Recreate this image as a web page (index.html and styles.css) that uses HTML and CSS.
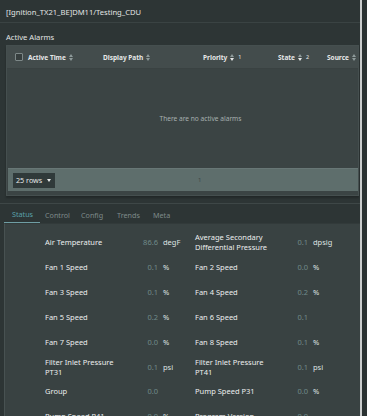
FILE: index.html
```html
<!DOCTYPE html>
<html>
<head>
<meta charset="utf-8">
<link rel="stylesheet" href="styles.css">
</head>
<body>
<div class="page">
  <div class="main">
    <div class="title">[Ignition_TX21_BE]DM11/Testing_CDU</div>
    <div class="section-label">Active Alarms</div>
    <div class="table">
      <div class="thead">
        <div class="th th-check"><span class="checkbox"></span></div>
        <div class="th th-time">Active Time <span class="sort"></span></div>
        <div class="th th-path">Display Path <span class="sort"></span></div>
        <div class="th th-prio">Priority <span class="sort"></span><sup>1</sup></div>
        <div class="th th-state">State <span class="sort"></span><sup>2</sup></div>
        <div class="th th-src">Source <span class="sort"></span></div>
      </div>
      <div class="tbody">There are no active alarms</div>
      <div class="tfoot">
        <div class="rows-select">25 rows <span class="caret"></span></div>
        <div class="pager">1</div>
      </div>
    </div>
    <div class="divider"></div>
    <div class="tabs">
      <div class="tab active">Status</div>
      <div class="tab">Control</div>
      <div class="tab">Config</div>
      <div class="tab">Trends</div>
      <div class="tab">Meta</div>
    </div>
    <div class="panel">
      <div class="grid">
        <div class="item"><div class="lbl">Air Temperature</div><div class="val">86.6</div><div class="unit">degF</div></div>
        <div class="item"><div class="lbl">Average Secondary Differential Pressure</div><div class="val">0.1</div><div class="unit">dpsig</div></div>
        <div class="item"><div class="lbl">Fan 1 Speed</div><div class="val">0.1</div><div class="unit">%</div></div>
        <div class="item"><div class="lbl">Fan 2 Speed</div><div class="val">0.0</div><div class="unit">%</div></div>
        <div class="item"><div class="lbl">Fan 3 Speed</div><div class="val">0.1</div><div class="unit">%</div></div>
        <div class="item"><div class="lbl">Fan 4 Speed</div><div class="val">0.2</div><div class="unit">%</div></div>
        <div class="item"><div class="lbl">Fan 5 Speed</div><div class="val">0.2</div><div class="unit">%</div></div>
        <div class="item"><div class="lbl">Fan 6 Speed</div><div class="val">0.1</div><div class="unit"></div></div>
        <div class="item"><div class="lbl">Fan 7 Speed</div><div class="val">0.0</div><div class="unit">%</div></div>
        <div class="item"><div class="lbl">Fan 8 Speed</div><div class="val">0.1</div><div class="unit">%</div></div>
        <div class="item"><div class="lbl">Filter Inlet Pressure PT31</div><div class="val">0.1</div><div class="unit">psi</div></div>
        <div class="item"><div class="lbl">Filter Inlet Pressure PT41</div><div class="val">0.1</div><div class="unit">psi</div></div>
        <div class="item"><div class="lbl">Group</div><div class="val">0.0</div><div class="unit"></div></div>
        <div class="item"><div class="lbl">Pump Speed P31</div><div class="val">0.0</div><div class="unit">%</div></div>
        <div class="item"><div class="lbl">Pump Speed P41</div><div class="val">0.0</div><div class="unit">%</div></div>
        <div class="item"><div class="lbl">Program Version</div><div class="val">0.0</div><div class="unit"></div></div>
      </div>
    </div>
  </div>
  <div class="scrollbar"></div>
</div>
</body>
</html>
```
FILE: styles.css
```css
html, body {
  margin: 0;
  padding: 0;
  height: 416px;
  overflow: hidden;
  background: #2d3535;
  font-family: "Noto Sans", "Open Sans", sans-serif;
  color: #e2e4e4;
}
.page {
  display: flex;
  height: 416px;
}
.main {
  flex: 1;
  min-width: 0;
  display: flex;
  flex-direction: column;
}
.main > * { flex-shrink: 0; }
.scrollbar {
  width: 5px;
  background: #2a3131;
  border-left: 2px solid #c9cccc;
}
.title {
  height: 23px;
  box-sizing: border-box;
  padding: 6px 6px 0;
  font-size: 7.6px;
  line-height: 12px;
  border-bottom: 1px solid #3a4343;
}
.section-label {
  height: 22px;
  box-sizing: border-box;
  padding: 8px 6px 0;
  font-size: 7.6px;
  line-height: 12px;
}
.table {
  margin: 0 1px 0 6px;
  background: #3b4444;
  border: 1px solid #454f4f;
  height: 151px;
  box-sizing: border-box;
  display: flex;
  flex-direction: column;
  box-shadow: 0 2px 2px rgba(0,0,0,0.25);
}
.thead {
  height: 22px;
  background: #434c4c;
  display: flex;
  align-items: center;
  font-size: 6.5px;
  font-weight: bold;
  color: #e6e8e8;
  border-bottom: 1px solid #3a4242;
}
.th {
  display: flex;
  align-items: center;
  white-space: nowrap;
}
.th-check { width: 21px; padding-left: 8px; box-sizing: border-box; }
.checkbox {
  width: 6px;
  height: 6px;
  border: 1px solid #7d8888;
  background: #363e3e;
  border-radius: 1px;
}
.th-time { width: 75px; }
.th-path { width: 100px; }
.th-prio { width: 75px; }
.th-state { width: 49px; }
.th-src { flex: 1; }
.sort {
  display: inline-block;
  width: 5px;
  height: 7px;
  margin-left: 3px;
  position: relative;
}
.sort::before, .sort::after {
  content: "";
  position: absolute;
  left: 0;
  border-left: 2.5px solid transparent;
  border-right: 2.5px solid transparent;
}
.sort::before { top: 0; border-bottom: 3px solid #8e9a9a; }
.sort::after { bottom: 0; border-top: 3px solid #8e9a9a; }
.th-prio .sort::after, .th-state .sort::after { border-top-color: #e6e8e8; }
.th sup {
  font-size: 5.5px;
  margin-left: 3px;
  font-weight: normal;
  vertical-align: 4px;
}
.tbody {
  flex: 1;
  display: flex;
  align-items: center;
  justify-content: center;
  font-size: 6.6px;
  color: #a7b0b0;
  padding-left: 36px;
}
.tfoot {
  height: 22px;
  margin: 0 0 4px 1px;
  background: #5e6e6c;
  display: flex;
  align-items: center;
  border-top: 1px solid #687776;
}
.rows-select {
  margin-left: 5px;
  height: 15px;
  width: 42px;
  box-sizing: border-box;
  background: #303a3a;
  color: #e6e8e8;
  font-size: 7.2px;
  display: flex;
  align-items: center;
  padding-left: 3px;
  gap: 5px;
}
.caret {
  width: 0;
  height: 0;
  border-left: 2.5px solid transparent;
  border-right: 2.5px solid transparent;
  border-top: 3px solid #e6e8e8;
}
.pager {
  margin-left: 143px;
  font-size: 6px;
  color: #3c4646;
}
.divider {
  height: 7px;
  border-bottom: 1px solid #3e4747;
}
.tabs {
  height: 19px;
  display: flex;
  align-items: flex-end;
  padding-left: 4px;
  font-size: 7.2px;
}
.tab {
  color: #7e8a8a;
  box-sizing: border-box;
  width: 36px;
  padding: 0 0 3px 5px;
}
.tab.active {
  color: #5aa0aa;
  border-bottom: 1px solid #6f9ea4;
  padding-left: 8px;
}
.panel {
  flex: 1 1 auto;
  min-height: 0;
  overflow: hidden;
  margin-left: 4px;
  background: #394242;
  border-left: 1px solid #485252;
  border-top: 1px solid #323a3a;
  padding: 6px 0 0 40px;
}
.grid {
  display: grid;
  grid-template-columns: 150px 150px;
}
.item {
  height: 24.85px;
  display: grid;
  grid-template-columns: 76px 32px auto;
  align-items: center;
  column-gap: 5px;
  font-size: 7.5px;
  line-height: 10px;
}
.lbl { color: #eceeee; }
.val { color: #708a8a; text-align: right; }
.unit { color: #dfe2e2; }
```
